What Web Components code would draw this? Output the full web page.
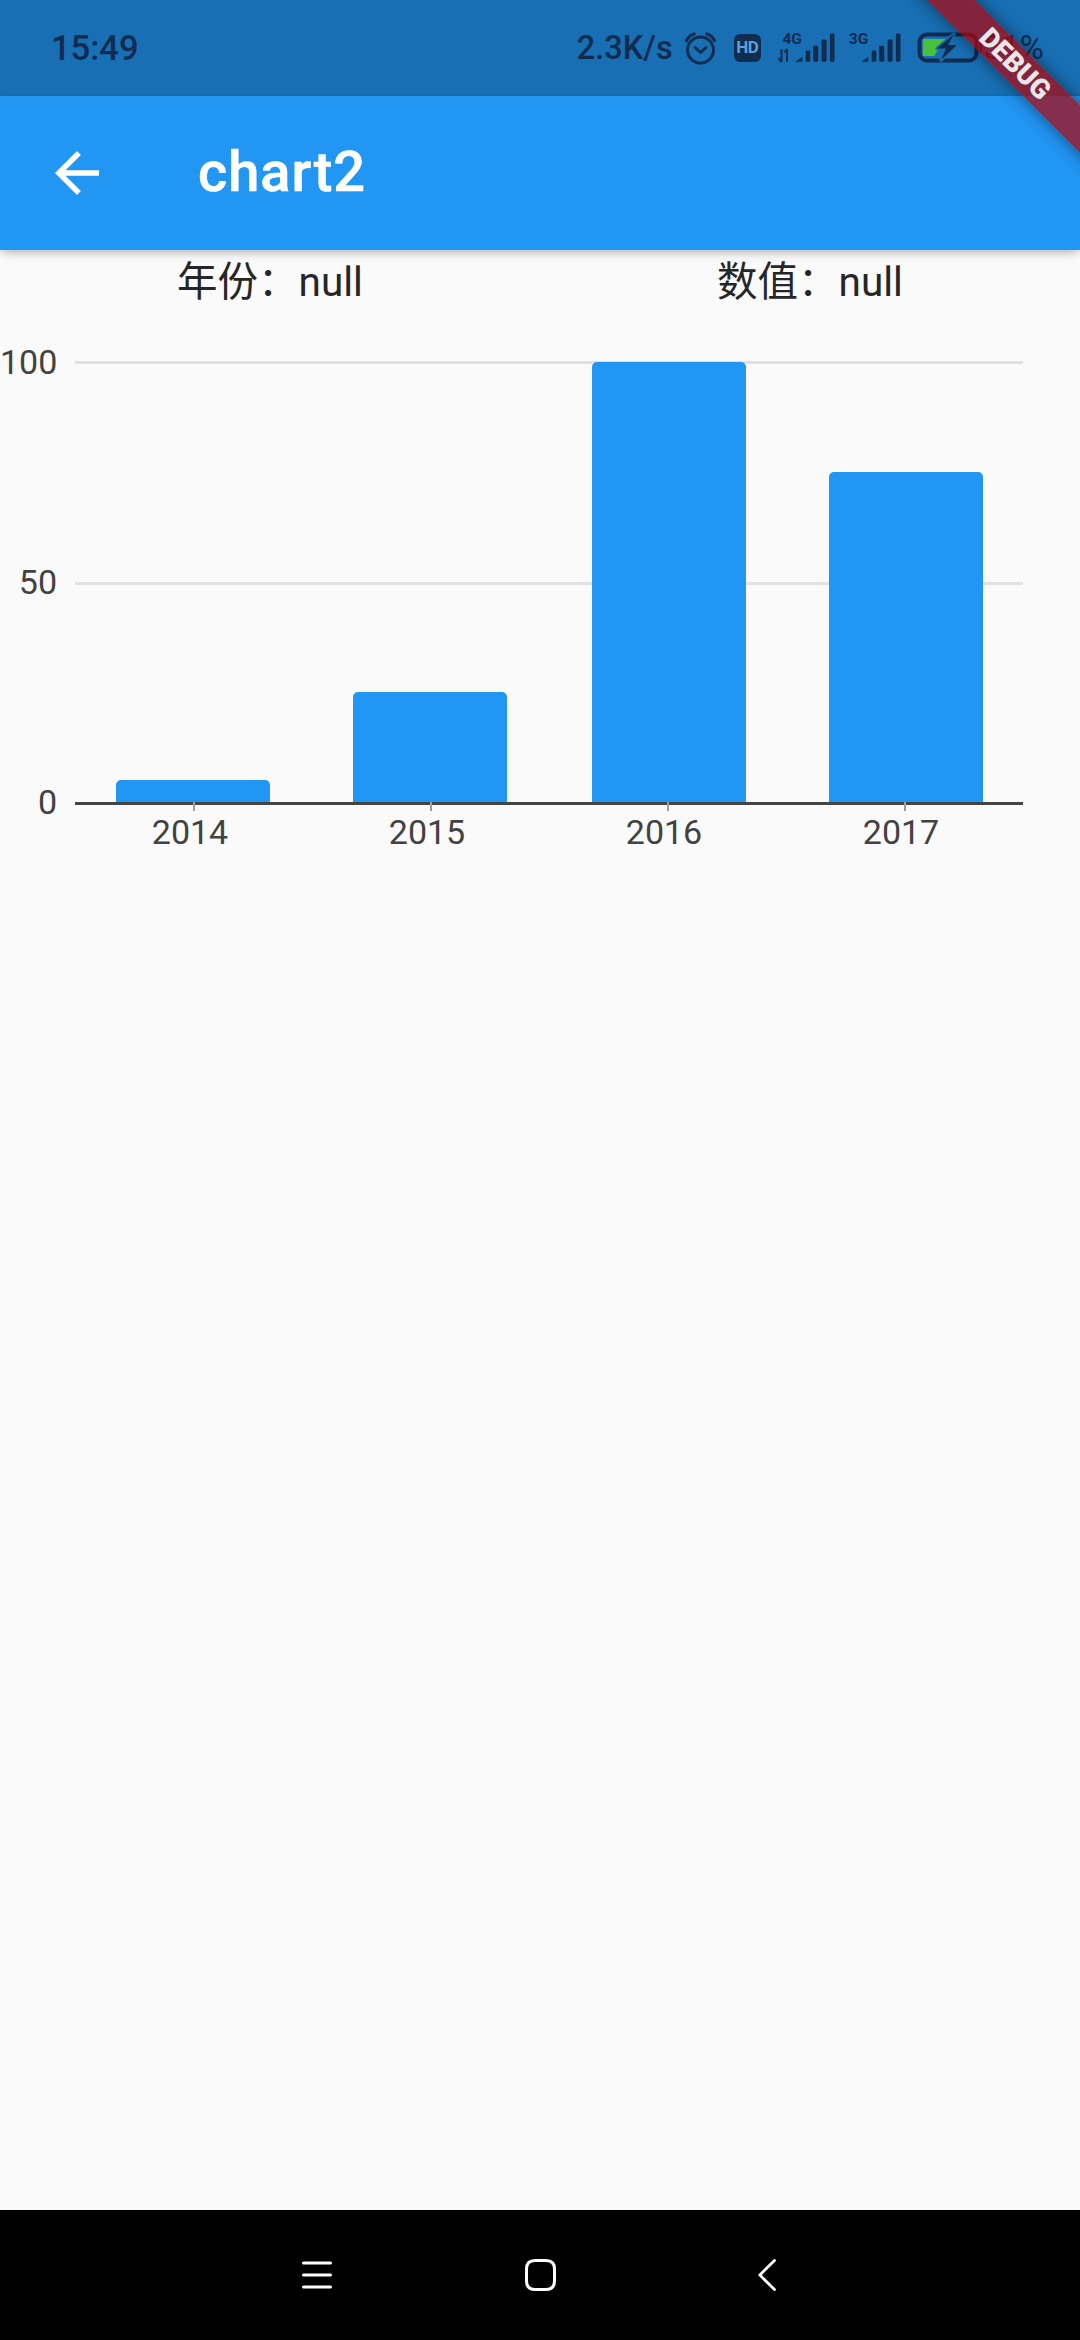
<!DOCTYPE html>
<html lang="zh">
<head>
<meta charset="utf-8">
<title>chart2</title>
<style>
html,body{margin:0;padding:0;background:#fafafa}
body{width:1080px;height:2340px;overflow:hidden;position:relative;display:flex;flex-direction:column;font-family:Roboto,"Noto Sans CJK SC",sans-serif}
main{flex:1;display:flex;flex-direction:column;min-height:0}
</style>
</head>
<body>
<status-bar time="15:49" speed="2.3K/s" battery="51%"></status-bar>
<app-bar>chart2</app-bar>
<main>
  <info-row>
    <info-item>年份：null</info-item>
    <info-item>数值：null</info-item>
  </info-row>
  <bar-chart>
    <chart-col value="5" nudge="-2">2014</chart-col>
    <chart-col value="25" nudge="-2">2015</chart-col>
    <chart-col value="100" nudge="2">2016</chart-col>
    <chart-col value="75" nudge="2">2017</chart-col>
  </bar-chart>
</main>
<nav-bar></nav-bar>
<debug-banner>DEBUG</debug-banner>

<script>
function define(name, html, init){
  customElements.define(name, class extends HTMLElement{
    constructor(){
      super();
      this.attachShadow({mode:'open'}).innerHTML = html;
    }
    connectedCallback(){ if(init) init(this, this.shadowRoot); }
  });
}
const INK = '#102c50';
const signalBars = `
  <polygon points="17,28.7 24.4,24 24.4,28.7"/>
  <rect x="27.7" y="17.4" width="4.6" height="11.3" rx="1"/>
  <rect x="35.2" y="12.8" width="5" height="15.9" rx="1"/>
  <rect x="43.6" y="6.4" width="5" height="22.3" rx="1"/>
  <rect x="51.9" y="0.6" width="4.6" height="28.1" rx="1"/>`;

define('status-bar', `
<style>
:host{display:flex;align-items:center;height:96px;flex:none;box-sizing:border-box;padding:0 36px 0 51px;background:#186fb4;color:${INK};font:400 33px/40px Roboto,sans-serif}
.time{font-weight:500;font-size:34.5px}
.speed{font-weight:500;font-size:32.5px}
.right{margin-left:auto;display:flex;align-items:center;height:96px}
svg{display:block;flex:none;overflow:visible}
.alarm{margin-left:12px;width:31px;height:34px}
.hd{margin-left:18px;width:27px;height:27.4px;background:${INK};border-radius:6px;display:flex;align-items:center;justify-content:center;color:#5ba0d8;font:700 17px/27px Roboto,sans-serif;letter-spacing:-.5px}
.sig{position:relative;width:57px;height:30px;margin-top:-1px}
.sig.a{margin-left:17px}
.sig.b{margin-left:14px;width:52px}
.sig span{position:absolute;top:-2px;font:700 15.5px/16px Roboto,sans-serif;color:${INK}}
.bat{margin-left:16px;width:66px;height:31px;margin-top:-1px}
.pct{margin-left:0}
</style>
<span class="time"></span>
<div class="right">
  <span class="speed"></span>
  <svg class="alarm" viewBox="0 0 31 34" fill="none" stroke="${INK}" stroke-width="3">
    <circle cx="15.5" cy="19" r="13"/>
    <path d="M10 16.5l5.5 5 5.5-5" stroke-linecap="round" stroke-linejoin="round"/>
    <path d="M1.5 9.5C3.5 6 6 4 9 3M29.5 9.5C27.5 6 25 4 22 3" stroke-width="3.4" stroke-linecap="round"/>
  </svg>
  <span class="hd">HD</span>
  <div class="sig a"><span style="left:4.700px">4G</span>
    <svg width="57" height="30" viewBox="0 0 57 30" fill="${INK}">
      ${signalBars}
      <path d="M3.500 16v13M0.600 25l2.900 4M9 16v13M6.300 19.500L9 16" stroke="${INK}" stroke-width="2" fill="none"/>
    </svg>
  </div>
  <div class="sig b"><span style="left:0">3G</span>
    <svg width="52" height="30" viewBox="5 0 52 30" fill="${INK}">${signalBars}</svg>
  </div>
  <svg class="bat" viewBox="0 0 66 31">
    <path d="M24 2.500H10A7.500 7.500 0 0 0 2.500 10V21A7.500 7.500 0 0 0 10 28.500H52A7.500 7.500 0 0 0 59.500 21V10A7.500 7.500 0 0 0 52 2.500Z" fill="none" stroke="${INK}" stroke-width="4"/>
    <rect x="62.500" y="10" width="3" height="11" rx="1.500" fill="${INK}"/>
    <polygon points="6,7 29,7 17,24 6,24" fill="#47c13a"/>
    <polygon points="37,2 20,16.500 29,16.500 24,28 40,13 31,13" fill="${INK}" stroke="#186fb4" stroke-width="3.500" paint-order="stroke" stroke-linejoin="round"/>
  </svg>
  <span class="pct"></span>
</div>`, (el, root)=>{
  root.querySelector('.time').textContent = el.getAttribute('time');
  root.querySelector('.speed').textContent = el.getAttribute('speed');
  root.querySelector('.pct').textContent = el.getAttribute('battery');
});

define('app-bar', `
<style>
:host{display:flex;align-items:center;flex:none;height:154px;box-sizing:border-box;padding-left:44px;background:#2196f3;color:#fff;position:relative;z-index:2;
box-shadow:0 5px 11px -3px rgba(0,0,0,.2),0 3px 6px rgba(0,0,0,.1)}
svg{width:66px;height:66px;display:block;flex:none}
.t{margin-left:88px;font:500 56px/66px Roboto,sans-serif;letter-spacing:1px;margin-top:-2px;-webkit-text-stroke:.6px #fff}
</style>
<svg viewBox="0 0 24 24" fill="#fff"><path d="M20 11H7.830l5.590-5.590L12 4l-8 8 8 8 1.410-1.410L7.830 13H20v-2z"/></svg>
<span class="t"><slot></slot></span>`);

define('info-row', `
<style>:host{display:flex;height:62px;flex:none;color:#262626}</style><slot></slot>`);

define('info-item', `
<style>:host{flex:1;display:flex;align-items:center;justify-content:center;padding-top:2px;font:400 40.5px/60px Roboto,"Noto Sans CJK SC",sans-serif}
</style><span><slot></slot></span>`);

define('bar-chart', `
<style>
:host{display:grid;grid-template-columns:75px 948px;padding-top:30px;flex:none;align-items:start;color:#424242;font:400 34px/40px Roboto,sans-serif}
.y{display:flex;flex-direction:column;justify-content:space-between;height:480px;text-align:right;padding-right:18px}
.plot{margin-top:20px;position:relative}
.cols{display:grid;grid-template-columns:repeat(4,1fr);position:relative}
.lines{position:absolute;left:0;right:0;top:-1px;height:442px;display:flex;flex-direction:column;justify-content:space-between}
.lines i{display:block;height:3px;background:#e2e2e2}
.lines i.axis{background:#444;height:3px;margin-bottom:-2px}
</style>
<div class="y"><span>100</span><span>50</span><span>0</span></div>
<div class="plot">
  <div class="lines"><i></i><i></i><i class="axis"></i></div>
  <div class="cols"><slot></slot></div>
</div>`);

define('chart-col', `
<style>
:host{display:flex;flex-direction:column;align-items:center}
.zone{height:440px;display:flex;align-items:flex-end;position:relative}
.bar{width:154px;background:#2196f3;border-radius:5px 5px 0 0}
.tick{width:2px;height:9px;margin-bottom:1px;background:#9e9e9e}
.lab{padding-right:7px;line-height:40px}
</style>
<div class="zone"><div class="bar"></div></div>
<div class="tick"></div>
<div class="lab"><slot></slot></div>`, (el, root)=>{
  const bar = root.querySelector('.bar');
  bar.style.height = (Number(el.getAttribute('value'))*4.4)+'px';
  bar.style.marginLeft = (Number(el.getAttribute('nudge'))||0)+'px';
});

define('nav-bar', `
<style>
:host{display:flex;align-items:center;flex:none;height:130px;box-sizing:border-box;padding-left:302px;background:#000}
svg{display:block;flex:none}
.home{margin-left:193px}
.back{margin-left:202px}
</style>
<svg width="30" height="30" viewBox="0 0 30 30" stroke="#fff" stroke-width="3" stroke-linecap="round" fill="none"><path d="M1.500 3H28.500M1.500 15H28.500M1.500 27H28.500"/></svg>
<svg class="home" width="31" height="32" viewBox="0 0 31 32" fill="none" stroke="#fff" stroke-width="3"><path d="M10 1.500H21C26.500 1.500 29.500 4.500 29.500 10V22C29.500 27.500 26.500 30.500 21 30.500H10C4.500 30.500 1.500 27.500 1.500 22V10C1.500 4.500 4.500 1.500 10 1.500Z"/></svg>
<svg class="back" width="18" height="32" viewBox="0 0 18 32" fill="none" stroke="#fff" stroke-width="2.800" stroke-linecap="round" stroke-linejoin="round"><path d="M16.500 1.500L1.800 16L16.500 30.500"/></svg>`);

define('debug-banner', `
<style>
:host{position:absolute;left:865px;top:47px;width:300px;height:34px;transform:rotate(45deg);background:rgba(177,3,9,.7);box-shadow:0 0 16px rgba(0,0,0,.5);
display:flex;align-items:center;justify-content:center;color:#e8e8e8;font:900 27.5px/34px Roboto,sans-serif;z-index:5}
</style><slot></slot>`);
</script>
</body>
</html>
